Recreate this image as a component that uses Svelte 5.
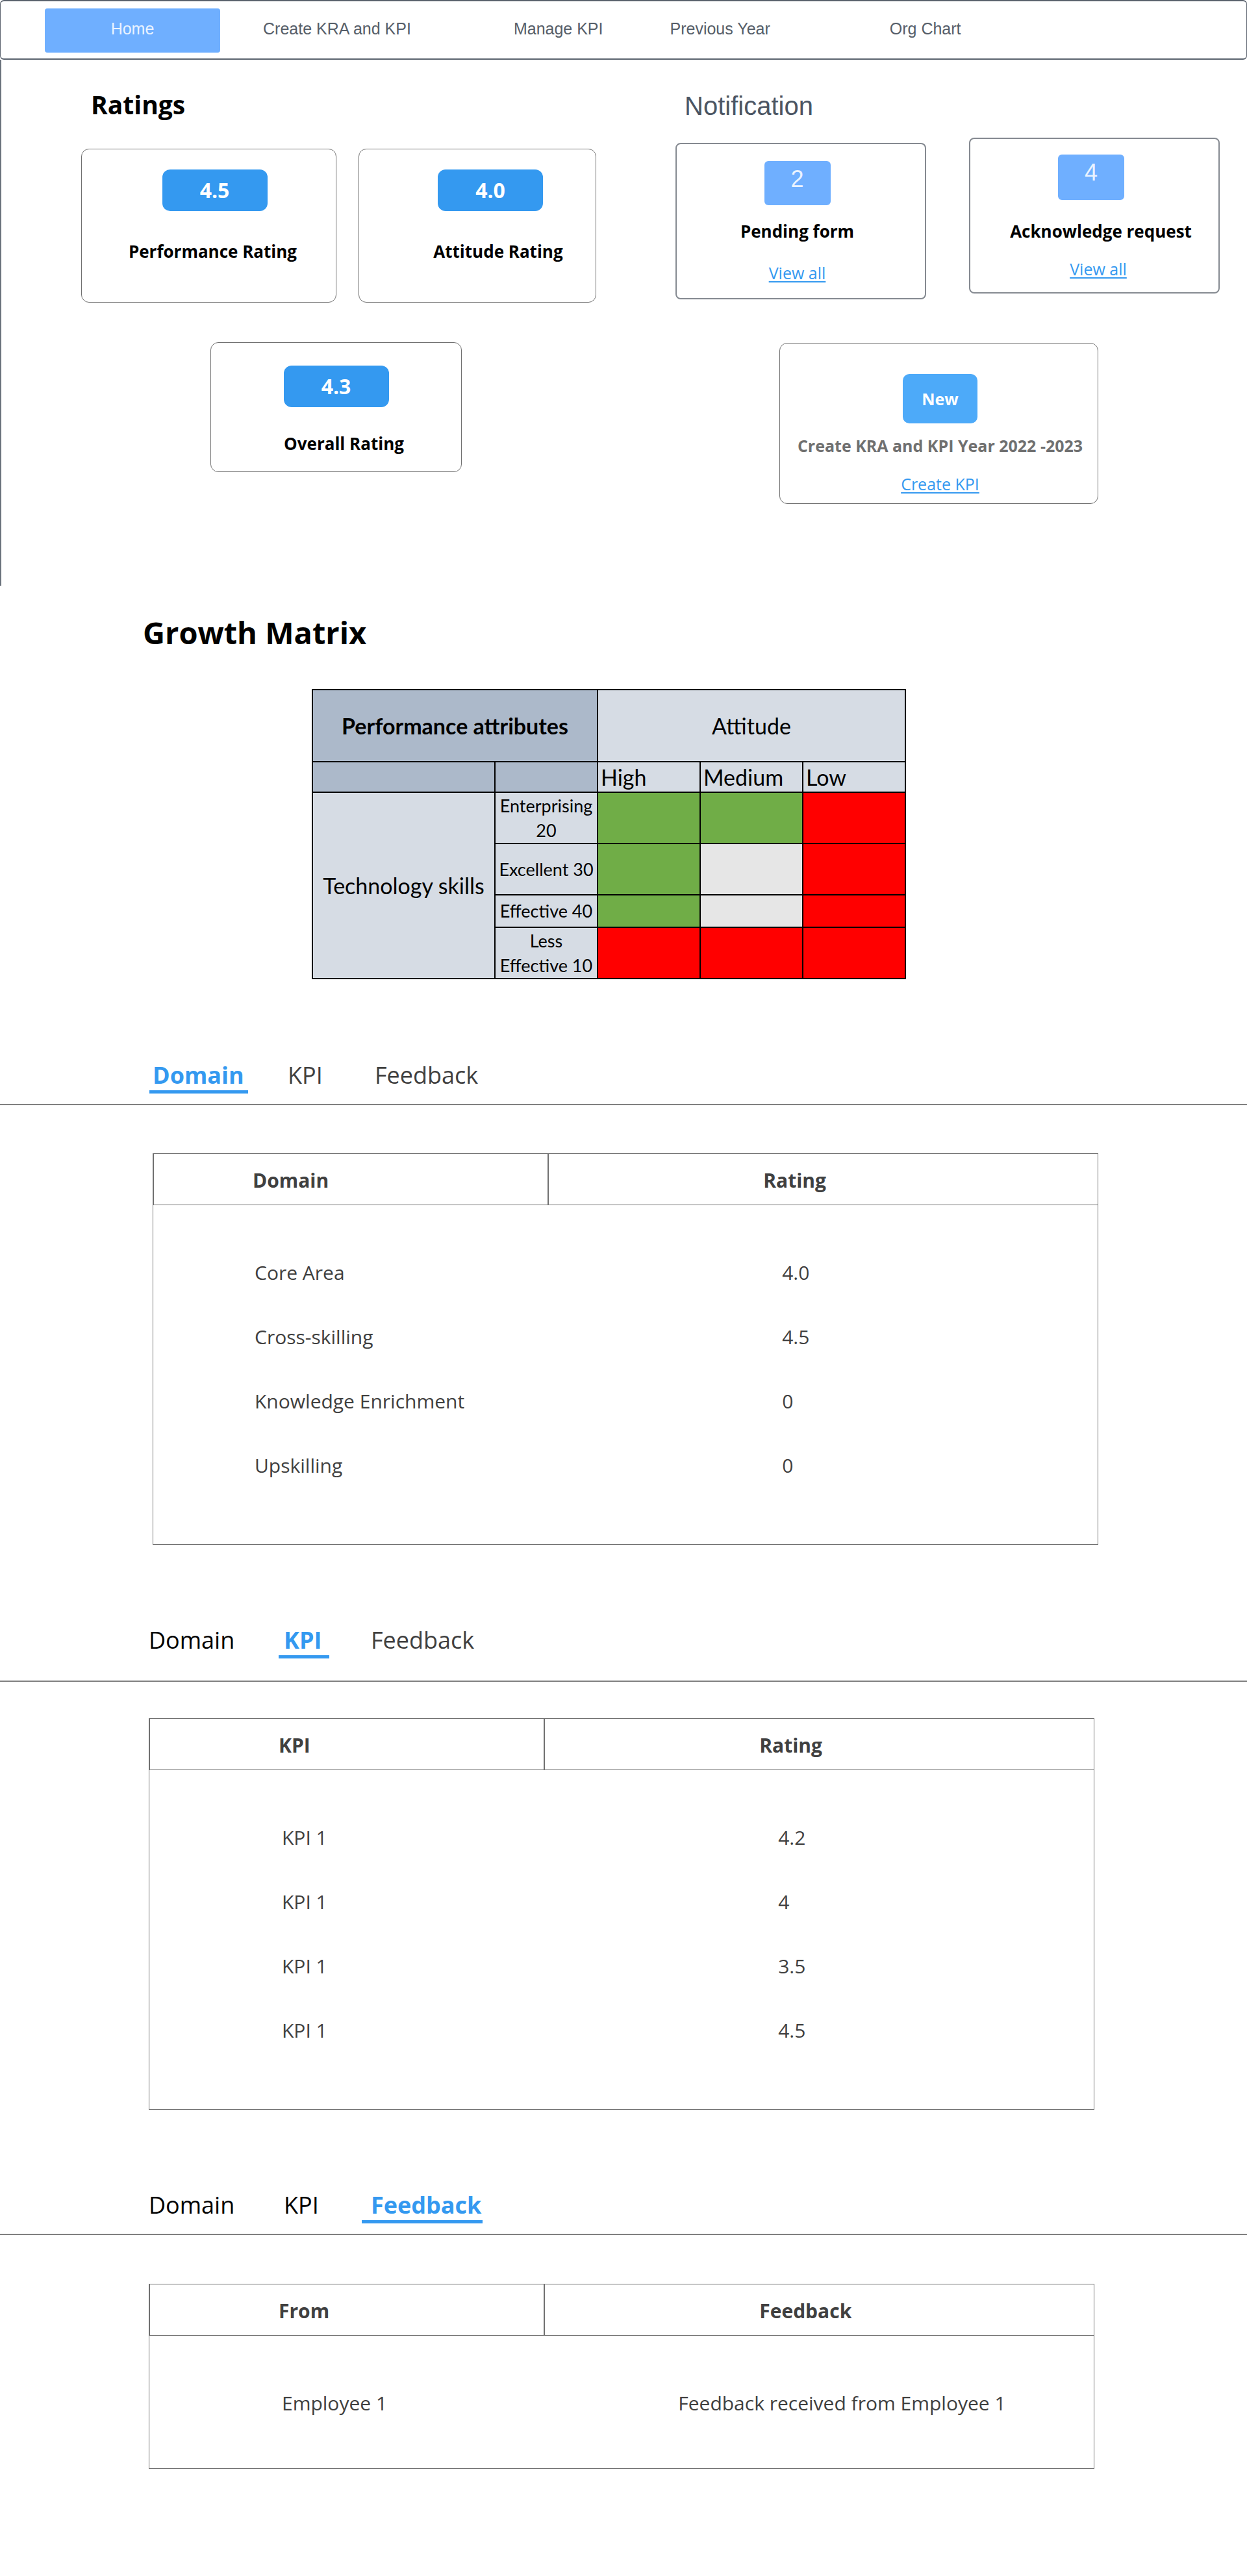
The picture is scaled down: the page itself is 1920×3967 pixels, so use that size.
<script>
  const navItems = [
    { id: 'home', label: 'Home' },
    { id: 'create', label: 'Create KRA and KPI' },
    { id: 'manage', label: 'Manage KPI' },
    { id: 'previous', label: 'Previous Year' },
    { id: 'org', label: 'Org Chart' }
  ];

  const tabs = ['Domain', 'KPI', 'Feedback'];

  const panels = [
    {
      id: 'domain',
      active: 'Domain',
      columns: ['Domain', 'Rating'],
      rows: [
        ['Core Area', '4.0'],
        ['Cross-skilling', '4.5'],
        ['Knowledge Enrichment', '0'],
        ['Upskilling', '0']
      ]
    },
    {
      id: 'kpi',
      active: 'KPI',
      columns: ['KPI', 'Rating'],
      rows: [
        ['KPI 1', '4.2'],
        ['KPI 1', '4'],
        ['KPI 1', '3.5'],
        ['KPI 1', '4.5']
      ]
    },
    {
      id: 'feedback',
      active: 'Feedback',
      columns: ['From', 'Feedback'],
      rows: [['Employee 1', 'Feedback received from Employee 1']]
    }
  ];

  const matrix = [
    { lines: ['Enterprising', '20'], cells: ['green', 'green', 'red'] },
    { lines: ['Excellent 30'], cells: ['green', 'grey', 'red'] },
    { lines: ['Effective 40'], cells: ['green', 'grey', 'red'] },
    { lines: ['Less', 'Effective 10'], cells: ['red', 'red', 'red'] }
  ];
</script>

<header class="topbar">
  <nav aria-label="Main">
    {#each navItems as item}
      <a class="nav-{item.id}" href="#{item.id}">{item.label}</a>
    {/each}
  </nav>
</header>

<main>
  <div class="dashboard">
    <section class="ratings">
      <h2>Ratings</h2>
      <div class="rating-row">
        <article class="card performance">
          <span class="badge">4.5</span>
          <h3>Performance Rating</h3>
        </article>
        <article class="card attitude">
          <span class="badge">4.0</span>
          <h3>Attitude Rating</h3>
        </article>
      </div>
      <article class="card overall">
        <span class="badge">4.3</span>
        <h3>Overall Rating</h3>
      </article>
    </section>

    <section class="notifications">
      <h2>Notification</h2>
      <div class="notice-row">
        <article class="card notice pending">
          <span class="badge">2</span>
          <h3>Pending form</h3>
          <a href="#pending">View all</a>
        </article>
        <article class="card notice acknowledge">
          <span class="badge">4</span>
          <h3>Acknowledge request</h3>
          <a href="#acknowledge">View all</a>
        </article>
      </div>
      <article class="card create">
        <span class="badge">New</span>
        <h3>Create KRA and KPI Year 2022 -2023</h3>
        <a href="#create-kpi">Create KPI</a>
      </article>
    </section>
  </div>

  <section class="growth">
    <h2>Growth Matrix</h2>
    <table class="matrix">
      <colgroup>
        <col class="wide" />
        <col /><col /><col /><col />
      </colgroup>
      <thead>
        <tr class="title">
          <th class="dark" colspan="2">Performance attributes</th>
          <th class="plain" colspan="3">Attitude</th>
        </tr>
        <tr class="levels">
          <td class="dark"></td>
          <td class="dark"></td>
          <th>High</th>
          <th>Medium</th>
          <th>Low</th>
        </tr>
      </thead>
      <tbody>
        {#each matrix as row, i}
          <tr class={i === 2 ? 'short' : 'tall'}>
            {#if i === 0}
              <th class="skills" rowspan="4">Technology skills</th>
            {/if}
            <th class="grade">
              {#each row.lines as line}<span>{line}</span>{/each}
            </th>
            {#each row.cells as cell}
              <td class={cell}></td>
            {/each}
          </tr>
        {/each}
      </tbody>
    </table>
  </section>

  {#each panels as panel}
    <section class="panel {panel.id}">
      <div class="tabs" role="tablist">
        {#each tabs as tab}
          <button type="button" role="tab" class:active={tab === panel.active} aria-selected={tab === panel.active}>{tab}</button>
        {/each}
      </div>
      <table class="data">
        <thead>
          <tr>
            {#each panel.columns as column}<th scope="col">{column}</th>{/each}
          </tr>
        </thead>
        <tbody>
          {#each panel.rows as row}
            <tr>
              {#each row as value}<td>{value}</td>{/each}
            </tr>
          {/each}
        </tbody>
      </table>
    </section>
  {/each}
</main>

<style>
  :global(body) {
    background: #fff;
    color: #000;
    font-family: 'Open Sans', 'Noto Sans', sans-serif;
  }

  h2,
  h3 {
    margin: 0;
    font-weight: 700;
  }

  /* Top navigation */
  .topbar {
    box-sizing: border-box;
    height: 92px;
    border: 2px solid #5a626d;
    border-width: 2px 1px;
    border-radius: 6px;
    padding: 11px 68px;
  }

  nav {
    display: flex;
    font: 25px/62px 'Liberation Sans', Arial, sans-serif;
  }

  nav a {
    color: #565e69;
    text-decoration: none;
    white-space: nowrap;
  }

  .nav-home {
    width: 270px;
    height: 68px;
    margin-right: 66px;
    border-radius: 4px;
    background: #6fafff;
    color: #eaf3ff;
    text-align: center;
  }

  .nav-create {
    margin-right: 158px;
  }

  .nav-manage {
    margin-right: 103px;
  }

  .nav-previous {
    margin-right: 184px;
  }

  /* Dashboard */
  .dashboard {
    display: grid;
    grid-template-columns: 915fr 838fr;
    box-sizing: border-box;
    min-height: 810px;
    padding: 45px 42px 0 123px;
    border-left: 2px solid #6b727c;
  }

  .ratings h2 {
    margin: 0 0 44px 15px;
    font-size: 39px;
    line-height: 48px;
  }

  .rating-row {
    display: grid;
    grid-template-columns: 393fr 366fr;
    gap: 34px;
    padding-right: 122px;
  }

  .card {
    display: flex;
    flex-direction: column;
    align-items: center;
    box-sizing: border-box;
    border: 1px solid #707070;
    border-radius: 12px;
  }

  .card h3 {
    font-size: 26px;
    line-height: 36px;
    white-space: nowrap;
  }

  .card a {
    color: #3499f0;
    font-size: 25px;
    line-height: 36px;
    text-decoration-thickness: 2px;
    text-underline-offset: 3px;
  }

  .badge {
    width: 162px;
    margin-bottom: 44px;
    border-radius: 12px;
    background: #3499f0;
    color: #fff;
    font-size: 32px;
    font-weight: 700;
    line-height: 64px;
    text-align: center;
  }

  .performance,
  .attitude {
    min-height: 237px;
    padding-top: 31px;
  }

  .performance {
    padding-left: 18px;
  }

  .performance h3 {
    padding-right: 6px;
  }

  .attitude {
    padding-left: 40px;
  }

  .attitude h3,
  .overall h3 {
    padding-left: 24px;
  }

  .overall {
    min-height: 200px;
    margin: 61px 329px 0 199px;
    padding-top: 35px;
  }

  .overall .badge {
    margin-bottom: 38px;
  }

  .notifications h2 {
    margin-left: 14px;
    color: #4b5563;
    font: 40px/52px 'Liberation Sans', Arial, sans-serif;
  }

  .notice-row {
    display: grid;
    grid-template-columns: 1fr 1fr;
    align-items: start;
    gap: 66px;
  }

  .notice {
    border: 2px solid #858a91;
    border-radius: 8px;
  }

  .notice .badge {
    width: 102px;
    height: 68px;
    border-radius: 6px;
    background: #6fafff;
    color: #eaf3ff;
    font: 36px/56px 'Liberation Sans', Arial, sans-serif;
  }

  .pending {
    margin-top: 31px;
    padding: 26px 11px 21px 0;
  }

  .pending .badge {
    margin-bottom: 22px;
  }

  .pending h3 {
    margin-bottom: 28px;
  }

  .acknowledge {
    margin-top: 23px;
    padding: 24px 0 18px 12px;
  }

  .acknowledge .badge {
    height: 70px;
    margin: 0 22px 30px 0;
  }

  .acknowledge h3 {
    margin-bottom: 22px;
    padding-left: 8px;
  }

  .create {
    min-height: 248px;
    margin: 67px 187px 0 160px;
    padding: 47px 0 12px 4px;
  }

  .create .badge {
    width: 115px;
    margin-bottom: 16px;
    border-radius: 10px;
    background: #4daaf9;
    font-size: 25px;
    line-height: 76px;
  }

  .create h3 {
    margin-bottom: 23px;
    color: #707070;
    font-size: 25px;
  }

  /* Growth matrix */
  .growth {
    padding-top: 40px;
  }

  .growth h2 {
    margin-left: 220px;
    font-size: 47px;
    line-height: 64px;
  }

  .matrix {
    width: 915px;
    margin: 55px 0 0 480px;
    border-collapse: collapse;
    table-layout: fixed;
    font-family: Lato, Carlito, Calibri, sans-serif;
    font-size: 34px;
    line-height: 40px;
  }

  .wide {
    width: 281px;
  }

  .matrix th,
  .matrix td {
    padding: 0;
    border: 2px solid #000;
    background: #d6dce4;
    font-weight: 400;
  }

  .matrix .title th {
    height: 109px;
  }

  .matrix .title .dark {
    font-weight: 700;
  }

  .matrix .dark {
    background: #acb9ca;
  }

  .matrix .levels th {
    height: 45px;
    padding-left: 4px;
    text-align: left;
  }

  .matrix .grade {
    font-size: 27px;
    line-height: 38px;
  }

  .grade span {
    display: block;
    white-space: nowrap;
  }

  .matrix .tall td {
    height: 77px;
  }

  .matrix .short td {
    height: 48px;
  }

  .matrix .green {
    background: #70ad47;
  }

  .matrix .red {
    background: #f00;
  }

  .matrix .grey {
    background: #e6e6e6;
  }

  /* Tabbed panels */
  .panel {
    --edge: 229px;
    --head-1: 198px;
    --cell-1: 204px;
    --head-2: 330px;
    --cell-2: 359px;
    --rest: 16px;
    --gap: 75px;
    --foot: 72px;
    --mark-left: 8px;
    --mark-right: 12px;
    padding-top: 124px;
  }

  .domain {
    --edge: 235px;
    --head-1: 152px;
    --cell-1: 156px;
    --gap: 74px;
    --mark-left: 5px;
    --mark-right: 6px;
    padding-top: 125px;
  }

  .kpi {
    --rest: 34px;
    --gap: 56px;
  }

  .feedback {
    --cell-2: 205px;
    --foot: 51px;
    --mark-left: 14px;
    --mark-right: 2px;
    padding-bottom: 163px;
  }

  .tabs {
    display: grid;
    grid-template-columns: 208px 134px auto;
    justify-content: start;
    justify-items: start;
    padding: 0 0 var(--rest) var(--edge);
    border-bottom: 2px solid #808080;
  }

  .tabs button {
    padding: 0;
    border: 0;
    border-bottom: 5px solid transparent;
    background: none;
    color: #000;
    font: 400 36px/46px 'Open Sans', 'Noto Sans', sans-serif;
  }

  .domain button,
  .kpi button:last-child {
    color: #404040;
  }

  .tabs .active {
    margin: 0 calc(0px - var(--mark-right)) 0 calc(0px - var(--mark-left));
    padding: 0 var(--mark-right) 0 var(--mark-left);
    border-color: #3499f0;
    color: #3499f0;
    font-weight: 700;
  }

  .data {
    width: calc(100% - 464px);
    margin: var(--gap) 0 0 var(--edge);
    border: 1px solid #707070;
    border-spacing: 0;
    table-layout: fixed;
    color: #404040;
    font-size: 30px;
    text-align: left;
  }

  .data th {
    padding: 4px 0 0 var(--head-2);
    border-bottom: 1px solid #707070;
    font-size: 30px;
    line-height: 74px;
  }

  .data th:first-child {
    width: 41.9%;
    box-sizing: border-box;
    padding-left: var(--head-1);
    border-left: 1px solid #707070;
    border-right: 2px solid #707070;
  }

  .data td {
    padding: 0 0 0 var(--cell-2);
    line-height: 99px;
  }

  .data td:first-child {
    padding-left: var(--cell-1);
  }

  .data tbody tr:first-child td {
    padding-top: 54px;
  }

  .data tbody tr:last-child td {
    padding-bottom: var(--foot);
  }
</style>
